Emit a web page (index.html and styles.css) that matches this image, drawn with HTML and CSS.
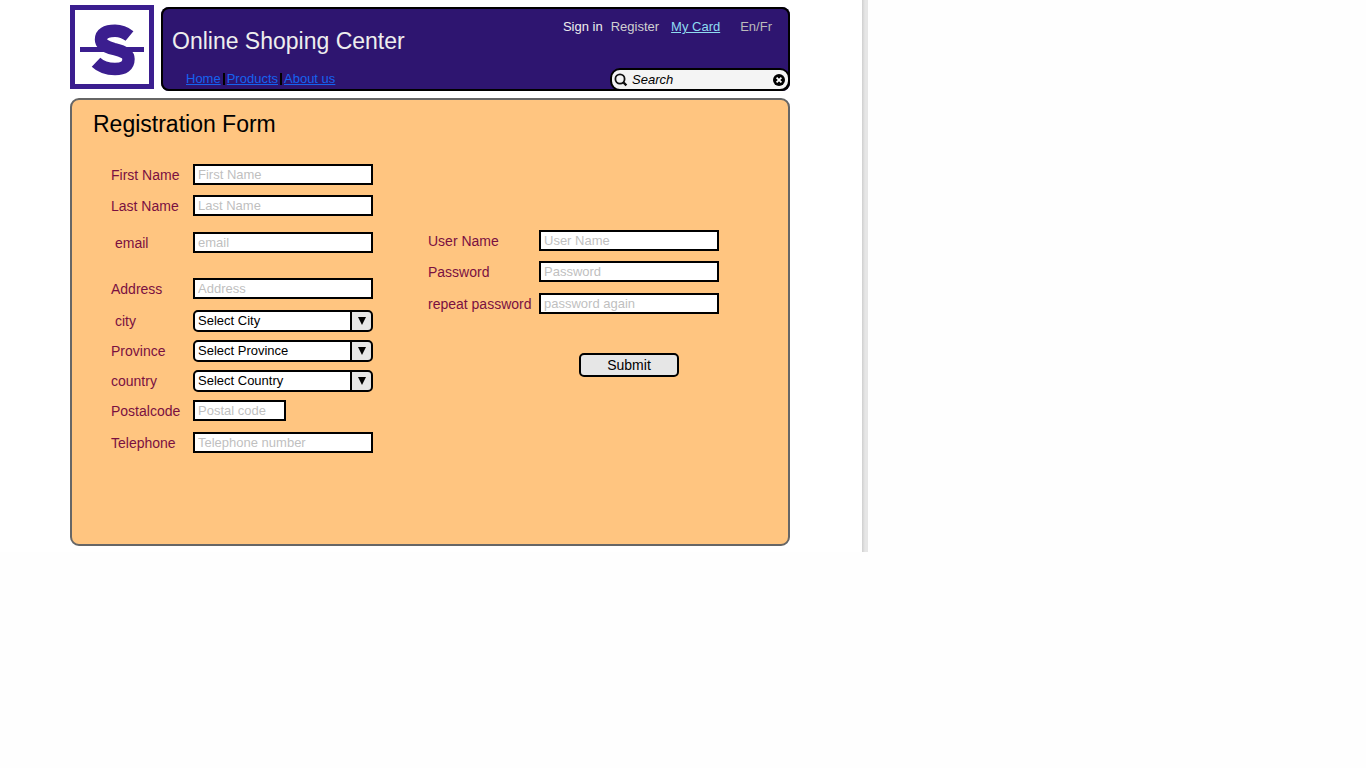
FILE: index.html
```html
<!DOCTYPE html>
<html lang="en">
<head>
<meta charset="utf-8">
<title>Online Shoping Center</title>
<link rel="stylesheet" href="styles.css">
</head>
<body>
<div class="sheet">
  <header class="header">
    <svg class="logo" viewBox="0 0 84 84" role="img" aria-label="S logo">
      <rect x="2.5" y="2.5" width="79" height="79" fill="#fff" stroke="#3b1e8f" stroke-width="5"/>
      <path d="M10 42h64v5H10z" fill="#3b1e8f"/>
      <path d="M59.500 31Q53 25.700 45 25.700Q31 25.700 31 34.500Q31 41 44 44Q58.500 47 58.500 54Q58.500 64 45 64Q33 64 26 57.300" fill="none" stroke="#3b1e8f" stroke-width="12.400"/>
    </svg>
    <div class="banner">
      <div class="banner-main">
        <p class="site-name">Online Shoping Center</p>
        <nav class="site-nav" aria-label="Main">
          <a href="#">Home</a><span class="bar"></span><a href="#">Products</a><span class="bar"></span><a href="#">About us</a>
        </nav>
      </div>
      <div class="banner-side">
        <nav class="account-nav" aria-label="Account">
          <a class="sign-in" href="#">Sign in</a>
          <a class="register" href="#">Register</a>
          <a class="card" href="#">My Card</a>
          <a class="language" href="#">En/Fr</a>
        </nav>
        <form class="search" role="search">
          <svg class="icon" viewBox="0 0 14 14" aria-hidden="true"><circle cx="6" cy="6" r="4.6" fill="none" stroke="#111" stroke-width="1.8"/><path d="M9 9l3.400 3.400" stroke="#111" stroke-width="2.4"/></svg>
          <input type="text" placeholder="Search" aria-label="Search">
          <button type="reset" class="clear" aria-label="Clear search">
            <svg class="icon" viewBox="0 0 14 14" aria-hidden="true"><circle cx="7" cy="7" r="6" fill="#000"/><path d="M4.6 4.6l4.8 4.8M9.4 4.6l-4.8 4.8" stroke="#fff" stroke-width="1.8"/></svg>
          </button>
        </form>
      </div>
    </div>
  </header>

  <main class="panel">
    <h1 class="title">Registration Form</h1>
    <form class="columns">
      <div class="personal">
        <div class="row"><label for="first">First Name</label><input id="first" class="field" type="text" placeholder="First Name"></div>
        <div class="row"><label for="last">Last Name</label><input id="last" class="field" type="text" placeholder="Last Name"></div>
        <div class="row space-m"><label class="inset" for="email">email</label><input id="email" class="field" type="text" placeholder="email"></div>
        <div class="row space-l"><label for="address">Address</label><input id="address" class="field" type="text" placeholder="Address"></div>
        <div class="row space-s"><label class="inset" for="city">city</label>
          <div class="select"><select id="city"><option>Select City</option></select><svg class="arrow" viewBox="0 0 8 8" aria-hidden="true"><path d="M0 0h8L4 8z"/></svg></div></div>
        <div class="row tight"><label for="province">Province</label>
          <div class="select"><select id="province"><option>Select Province</option></select><svg class="arrow" viewBox="0 0 8 8" aria-hidden="true"><path d="M0 0h8L4 8z"/></svg></div></div>
        <div class="row tight"><label for="country">country</label>
          <div class="select"><select id="country"><option>Select Country</option></select><svg class="arrow" viewBox="0 0 8 8" aria-hidden="true"><path d="M0 0h8L4 8z"/></svg></div></div>
        <div class="row tight"><label for="postal">Postalcode</label><input id="postal" class="field short" type="text" placeholder="Postal code"></div>
        <div class="row space-s"><label for="phone">Telephone</label><input id="phone" class="field" type="text" placeholder="Telephone number"></div>
      </div>
      <div class="account">
        <div class="row"><label for="user">User Name</label><input id="user" class="field" type="text" placeholder="User Name"></div>
        <div class="row"><label for="password">Password</label><input id="password" class="field" type="password" placeholder="Password"></div>
        <div class="row space-s"><label for="again">repeat password</label><input id="again" class="field" type="password" placeholder="password again"></div>
        <button class="submit" type="submit">Submit</button>
      </div>
    </form>
  </main>
</div>
</body>
</html>
```
FILE: styles.css
```css
* {
  box-sizing: border-box;
}

body {
  margin: 0;
  background: #fefefe;
  font-family: "Liberation Sans", Arial, sans-serif;
  font-size: 14px;
  line-height: 16px;
}

input,
select,
button {
  margin: 0;
  font: inherit;
}

.sheet {
  max-width: 868px;
  padding: 5px 78px 6px 70px;
  background: linear-gradient(to right, #cfcfcf, #e6e6e6 3px) right / 6px 100% no-repeat #fff;
}

.header {
  display: flex;
  gap: 7px;
}

.logo {
  flex: none;
  width: 84px;
  height: 84px;
}

.banner {
  flex: 1;
  display: flex;
  justify-content: space-between;
  min-height: 84px;
  margin-top: 2px;
  background: #2e1570;
  border-radius: 8px;
  box-shadow: inset 0 0 0 2px #000;
}

.banner-main {
  padding: 20px 0 0 11px;
}

.site-name {
  margin: 0;
  color: #eee;
  font-size: 23px;
  line-height: 28px;
}

.site-nav {
  display: flex;
  align-items: center;
  margin-top: 16px;
  padding-left: 14px;
  font-size: 13px;
}

.site-nav a {
  color: #1563f0;
}

.bar {
  width: 2px;
  height: 12px;
  margin: 0 2px;
  background: #000;
}

.banner-side {
  display: flex;
  flex-direction: column;
  justify-content: space-between;
  align-items: flex-end;
}

.account-nav {
  display: flex;
  padding: 12px 18px 0 0;
  font-size: 13px;
}

.account-nav a {
  color: #d0d0d0;
  text-decoration: none;
}

.account-nav .sign-in {
  margin-right: 8px;
  color: #eee;
}

.account-nav .register {
  margin-right: 12px;
}

.account-nav .card {
  margin-right: 20px;
  color: #8edcf0;
  text-decoration: underline;
}

.account-nav .language {
  color: #bbb;
}

.search {
  display: flex;
  align-items: center;
  gap: 4px;
  width: 180px;
  height: 23px;
  padding: 0 2px;
  background: #f4f4f4;
  border: 2px solid #000;
  border-radius: 10px;
}

.icon {
  flex: none;
  display: block;
  width: 14px;
  height: 14px;
}

.search input {
  flex: 1;
  min-width: 0;
  padding: 0;
  background: none;
  border: 0;
  font-size: 13px;
  font-style: italic;
}

.search input::placeholder {
  color: #000;
}

.clear {
  padding: 0;
  background: none;
  border: 0;
}

.panel {
  margin-top: 7px;
  padding: 10px 69px 91px 21px;
  background: #ffc580;
  border: 2px solid #666;
  border-radius: 9px;
}

.title {
  margin: 0;
  font-size: 23px;
  font-weight: 400;
  line-height: 28px;
}

.columns {
  display: flex;
  justify-content: space-between;
  margin-top: 26px;
  padding-left: 18px;
}

.row {
  display: flex;
  align-items: center;
}

.row + .row {
  margin-top: 10px;
}

.row + .tight {
  margin-top: 8px;
}

.row + .space-s {
  margin-top: 11px;
}

.row + .space-m {
  margin-top: 16px;
}

.row + .space-l {
  margin-top: 25px;
}

label {
  width: 82px;
  color: #7a1040;
}

.inset {
  padding-left: 4px;
}

.account {
  display: flex;
  flex-direction: column;
  padding-top: 66px;
}

.account label {
  width: 111px;
}

.field {
  width: 180px;
  height: 21px;
  padding: 0 3px;
  background: #fff;
  border: 2px solid #000;
  border-radius: 0;
  font-size: 13px;
}

.field::placeholder {
  color: #bfbfbf;
}

.short {
  width: 93px;
}

.select {
  position: relative;
  width: 180px;
}

.select select {
  display: block;
  width: 100%;
  height: 22px;
  padding: 0 22px 0 3px;
  appearance: none;
  background: linear-gradient(to right, #000 2px, #e6e6e6 2px) right / 21px 100% no-repeat #fff;
  border: 2px solid #000;
  border-radius: 5px;
  color: #000;
  font-size: 13px;
}

.arrow {
  position: absolute;
  top: 7px;
  right: 7px;
  width: 8px;
  height: 8px;
  pointer-events: none;
}

.submit {
  width: 100px;
  height: 24px;
  margin: 39px 0 0 151px;
  padding: 0;
  background: #e6e6e6;
  border: 2px solid #000;
  border-radius: 5px;
  color: #000;
}
```
